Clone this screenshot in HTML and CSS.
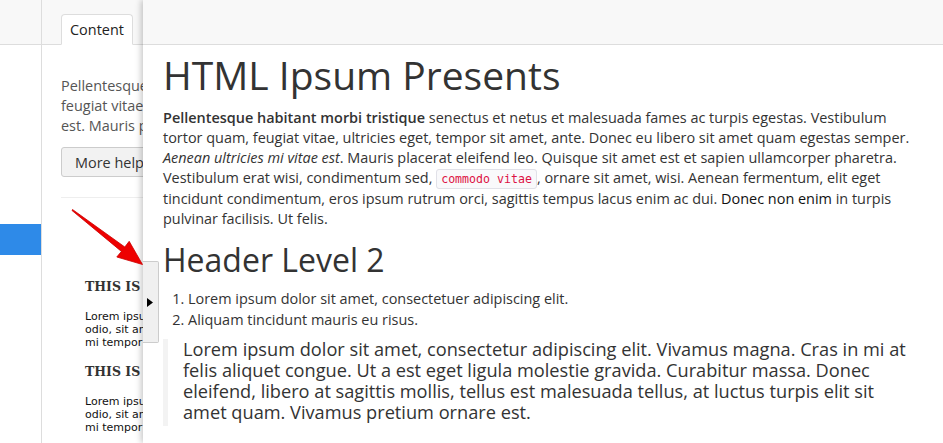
FILE: index.html
```html
<!DOCTYPE html>
<html>
<head>
<meta charset="utf-8">
<link rel="stylesheet" href="styles.css">
</head>
<body>
<div class="app">
  <aside class="rail">
    <div class="rail-top"></div>
    <div class="rail-item active"></div>
  </aside>
  <main class="stage">
    <div class="stage-head">
      <div class="tab">Content</div>
    </div>
    <div class="stage-body">
      <p class="intro">Pellentesque habitant morbi tristique senectus<br>feugiat vitae, ultricies eget, tempor sit amet<br>est. Mauris placerat eleifend leo.</p>
      <button class="btn">More help</button>
      <hr class="rule">
      <div class="preview">
        <h3 class="pv-h">THIS IS A HEADING</h3>
        <p class="pv-p">Lorem ipsum dolor sit amet, consectetur adipiscing elit.<br>odio, sit amet, consectetur adipiscing elit, sed do<br>mi tempor nunc, vel lacinia elit.</p>
        <h3 class="pv-h">THIS IS A HEADING</h3>
        <p class="pv-p">Lorem ipsum dolor sit amet, consectetur adipiscing elit.<br>odio, sit amet, consectetur adipiscing elit, sed do<br>mi tempor nunc, vel lacinia elit.</p>
      </div>
    </div>
  </main>

  <section class="panel">
    <div class="panel-head"></div>
    <div class="panel-body">
      <h1>HTML Ipsum Presents</h1>
      <p><strong>Pellentesque habitant morbi tristique</strong> senectus et netus et malesuada fames ac turpis egestas. Vestibulum tortor quam, feugiat vitae, ultricies eget, tempor sit amet, ante. Donec eu libero sit amet quam egestas semper. <em>Aenean ultricies mi vitae est</em>. Mauris placerat eleifend leo. Quisque sit amet est et sapien ullamcorper pharetra. Vestibulum erat wisi, condimentum sed, <code>commodo vitae</code>, ornare sit amet, wisi. Aenean fermentum, elit eget tincidunt condimentum, eros ipsum rutrum orci, sagittis tempus lacus enim ac dui. <a href="#">Donec non enim</a> in turpis pulvinar facilisis. Ut felis.</p>
      <h2>Header Level 2</h2>
      <ol>
        <li>Lorem ipsum dolor sit amet, consectetuer adipiscing elit.</li>
        <li>Aliquam tincidunt mauris eu risus.</li>
      </ol>
      <blockquote><p>Lorem ipsum dolor sit amet, consectetur adipiscing elit. Vivamus magna. Cras in mi at felis aliquet congue. Ut a est eget ligula molestie gravida. Curabitur massa. Donec eleifend, libero at sagittis mollis, tellus est malesuada tellus, at luctus turpis elit sit amet quam. Vivamus pretium ornare est.</p></blockquote>
    </div>
    <button class="handle" aria-label="Collapse"><svg width="6" height="9" viewBox="0 0 6 9"><path d="M0 0 L6 4.5 L0 9 Z" fill="#000"/></svg></button>
  </section>

  <svg class="arrow" width="943" height="443" viewBox="0 0 943 443">
    <polygon points="72.5,209.5 124.8,247 129.2,241.3 142.5,264.5 116.8,257 121.4,251.4 72,210.5" fill="#ee0000" stroke="#cc0000" stroke-width="0.8" stroke-linejoin="round"/>
  </svg>
</div>
</body>
</html>
```

FILE: styles.css
```css
* { box-sizing: border-box; }
html, body { margin: 0; padding: 0; }
body {
  width: 943px;
  height: 443px;
  overflow: hidden;
  background: #fff;
  font-family: "Open Sans", "Liberation Sans", sans-serif;
  color: #333;
}
.app {
  position: relative;
  display: flex;
  width: 943px;
  height: 443px;
  overflow: hidden;
}
.rail {
  width: 42px;
  flex: none;
  border-right: 1px solid #ddd;
  display: flex;
  flex-direction: column;
}
.rail-top {
  height: 45px;
  flex: none;
  background: #f8f8f8;
  border-bottom: 1px solid #ddd;
}
.rail-item.active {
  margin-top: 179px;
  height: 31px;
  flex: none;
  background: #2e8ae8;
}
.stage {
  flex: 1;
  display: flex;
  flex-direction: column;
  min-width: 0;
}
.stage-head {
  height: 45px;
  flex: none;
  background: #f8f8f8;
  border-bottom: 1px solid #ddd;
  display: flex;
  align-items: flex-end;
  padding-left: 19px;
}
.tab {
  height: 31px;
  margin-bottom: -1px;
  padding: 0 8px;
  background: #fff;
  border: 1px solid #ddd;
  border-bottom-color: #fff;
  border-radius: 4px 4px 0 0;
  font-size: 14.45px;
  line-height: 30px;
  color: #222;
}
.stage-body {
  padding: 31px 0 0 19px;
  flex: none;
}
.intro {
  margin: 0;
  font-size: 14.45px;
  line-height: 20px;
  color: #555;
  white-space: nowrap;
}
.btn {
  display: block;
  margin-top: 11px;
  height: 30px;
  padding: 0 13px;
  font-family: inherit;
  font-size: 14.45px;
  color: #333;
  background: #f2f2f2;
  border: 1px solid #ccc;
  border-radius: 3px;
  white-space: nowrap;
}
.rule {
  margin: 20px 0 0;
  border: 0;
  border-top: 1px solid #eee;
  width: 300px;
}
.preview {
  padding: 80px 0 0 24px;
}
.pv-h {
  margin: 0;
  font-family: "DejaVu Serif", "Liberation Serif", serif;
  font-weight: bold;
  font-size: 12.5px;
  line-height: 18px;
  color: #333;
  white-space: nowrap;
}
.pv-p {
  margin: 14px 0 14px;
  font-family: "DejaVu Sans", Verdana, sans-serif;
  font-size: 11px;
  line-height: 13px;
  color: #111;
  white-space: nowrap;
}

.panel {
  position: absolute;
  left: 143px;
  top: 0;
  right: 0;
  bottom: 0;
  background: #fff;
  box-shadow: -2px 0 6px rgba(0,0,0,0.22);
  display: flex;
  flex-direction: column;
}
.panel-head {
  height: 45px;
  flex: none;
  background: #f8f8f8;
  border-bottom: 1px solid #ddd;
}
.panel-body {
  flex: none;
  padding: 0 20px;
  font-size: 14.45px;
  line-height: 20px;
  color: #333;
}
.panel-body h1 {
  margin: 10px 0 13px;
  font-size: 39px;
  font-weight: 400;
  line-height: 40px;
  color: #333;
}
.panel-body p { margin: 0 0 10px; }
.panel-body strong { font-weight: 600; }
.panel-body a { color: #111; text-decoration: none; }
.panel-body code {
  font-family: "DejaVu Sans Mono", "Liberation Mono", monospace;
  font-size: 11.6px;
  color: #dd1144;
  background: #f9f9fb;
  border: 1px solid #e1e1e8;
  border-radius: 3px;
  padding: 2px 4px;
}
.panel-body h2 {
  margin: 11px 0 8px;
  font-size: 32px;
  font-weight: 400;
  line-height: 40px;
  color: #333;
}
.panel-body ol {
  margin: 0 0 9px 25px;
  padding: 0;
  line-height: 21px;
}
.panel-body blockquote {
  margin: 0;
  padding: 0 8px 3px 15px;
  border-left: 5px solid #f3f3f3;
}
.panel-body blockquote p {
  margin: 0;
  font-size: 18.2px;
  line-height: 21px;
  color: #333;
}
.handle {
  position: absolute;
  left: 0;
  top: 261px;
  width: 16px;
  height: 82px;
  padding: 0;
  background: #f0f0f0;
  border: 1px solid #ccc;
  border-left: 0;
  border-radius: 0 2px 2px 0;
  display: flex;
  align-items: center;
  justify-content: center;
}
.handle svg { margin-left: -2px; margin-top: 0; }
.arrow {
  position: absolute;
  left: 0;
  top: 0;
  pointer-events: none;
}
```
